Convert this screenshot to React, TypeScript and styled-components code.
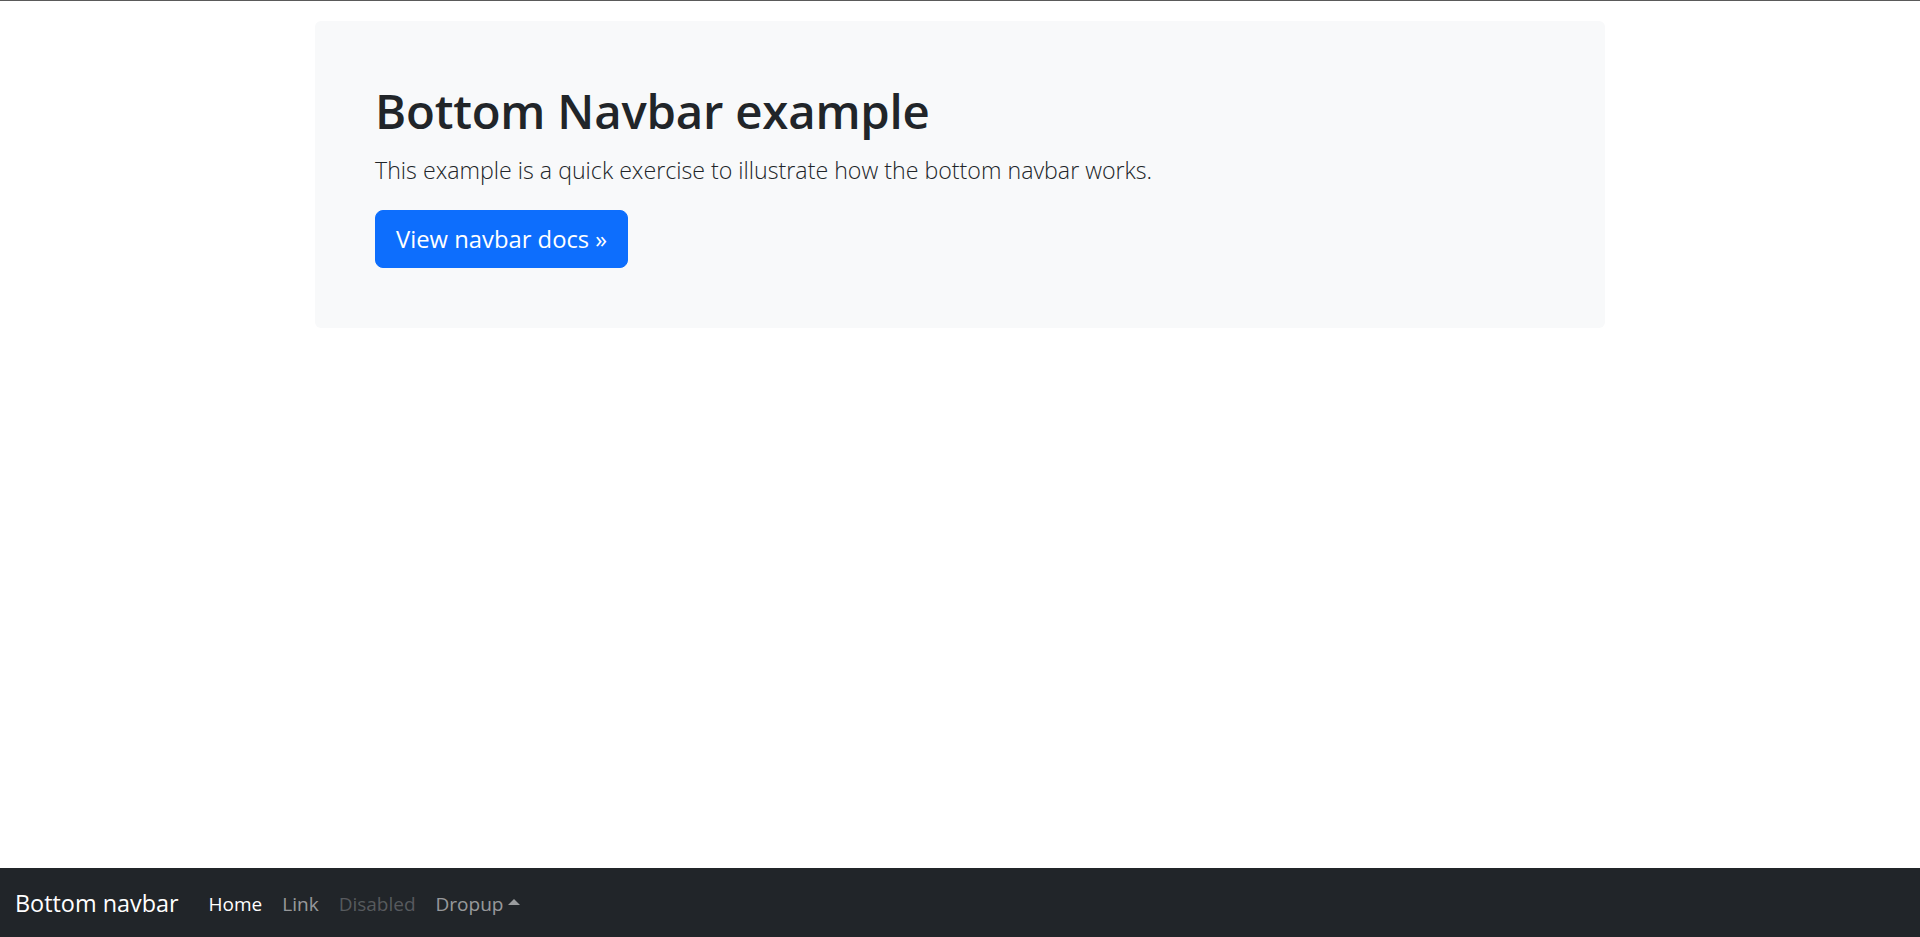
import React from "react";
import styled, { createGlobalStyle } from "styled-components";

const GlobalStyle = createGlobalStyle`
  html, body { margin: 0; padding: 0; }
  body {
    background: #fff;
    color: #212529;
    font-family: "Open Sans", "Noto Sans", "Liberation Sans", sans-serif;
    font-size: 20px;
    line-height: 1.5;
    border-top: 1px solid #5a5a5a;
  }
  * { box-sizing: border-box; }
`;

const Page = styled.div`
  min-height: 936px;
  display: flex;
  flex-direction: column;
`;

const Main = styled.main`
  width: 1290px;
  margin: 20px auto 0;
`;

const Jumbotron = styled.div`
  background: #f8f9fa;
  border-radius: 6px;
  padding: 60px;
`;

const Title = styled.h1`
  margin: 0 0 10px;
  font-size: 47.3px;
  font-weight: 600;
  line-height: 60px;
  color: #212529;
  letter-spacing: -0.2px;
`;

const Lead = styled.p`
  margin: 0 0 20px;
  font-size: 23.2px;
  font-weight: 300;
  line-height: 38.5px;
  color: #212529;
`;

const PrimaryButton = styled.a`
  display: inline-block;
  background: #0d6efd;
  color: #fff;
  border: 1px solid #0d6efd;
  border-radius: 8px;
  padding: 10px 20px;
  font-size: 23.8px;
  line-height: 36.5px;
  text-decoration: none;
  cursor: pointer;
`;

const Navbar = styled.nav`
  position: fixed;
  left: 0;
  right: 0;
  bottom: 0;
  height: 69px;
  background: #212529;
  display: flex;
  align-items: center;
  padding: 3px 15px 0;
`;

const Brand = styled.a`
  color: #fff;
  font-size: 23.4px;
  line-height: 37.5px;
  padding: 6px 0;
  margin-right: 20px;
  text-decoration: none;
  white-space: nowrap;
`;

const NavList = styled.ul`
  display: flex;
  list-style: none;
  margin: 0;
  padding: 0;
`;

const NavLink = styled.a<{ $state?: "active" | "disabled" | "normal" }>`
  display: flex;
  align-items: center;
  padding: 10px 10px;
  font-size: 19px;
  line-height: 30px;
  text-decoration: none;
  white-space: nowrap;
  color: ${(p) =>
    p.$state === "active"
      ? "#fff"
      : p.$state === "disabled"
      ? "rgba(255,255,255,0.25)"
      : "rgba(255,255,255,0.55)"};
`;

const Caret = styled.span`
  display: inline-block;
  margin-left: 5px;
  width: 0;
  height: 0;
  border-left: 6px solid transparent;
  border-right: 6px solid transparent;
  border-bottom: 6px solid currentColor;
  transform: translateY(-2px);
`;

export default function App() {
  return (
    <>
      <GlobalStyle />
      <Page>
        <Main>
          <Jumbotron>
            <Title>Bottom Navbar example</Title>
            <Lead>This example is a quick exercise to illustrate how the bottom navbar works.</Lead>
            <PrimaryButton>View navbar docs »</PrimaryButton>
          </Jumbotron>
        </Main>
        <Navbar>
          <Brand>Bottom navbar</Brand>
          <NavList>
            <li><NavLink $state="active">Home</NavLink></li>
            <li><NavLink>Link</NavLink></li>
            <li><NavLink $state="disabled">Disabled</NavLink></li>
            <li><NavLink>Dropup<Caret /></NavLink></li>
          </NavList>
        </Navbar>
      </Page>
    </>
  );
}
